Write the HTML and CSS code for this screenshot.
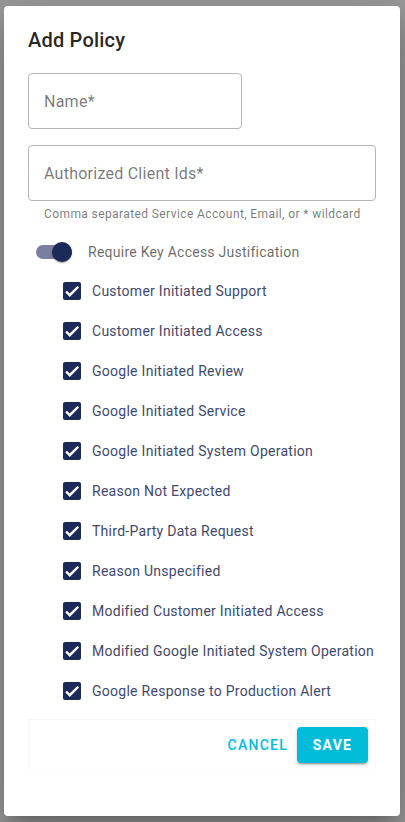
FILE: index.html
```html
<!DOCTYPE html>
<html>
<head lang="en">
    <meta charset="UTF-8">
    <title>Add Policy</title>
    <link rel="stylesheet" href="styles.css">
</head>
<body>
    <div class="dialog">
        <h2 class="title">Add Policy</h2>

        <div class="field field-short">
            <span class="placeholder">Name*</span>
        </div>

        <div class="field field-wide">
            <span class="placeholder">Authorized Client Ids*</span>
        </div>
        <div class="hint">Comma separated Service Account, Email, or * wildcard</div>

        <div class="toggle-row">
            <span class="toggle">
                <span class="toggle-bar"></span>
                <span class="toggle-thumb"></span>
            </span>
            <span class="toggle-label">Require Key Access Justification</span>
        </div>

        <ul class="reasons">
            <li><span class="box"><svg viewBox="0 0 24 24"><path d="M4.1 12.7 9 17.6 20.3 6.3"/></svg></span>Customer Initiated Support</li>
            <li><span class="box"><svg viewBox="0 0 24 24"><path d="M4.1 12.7 9 17.6 20.3 6.3"/></svg></span>Customer Initiated Access</li>
            <li><span class="box"><svg viewBox="0 0 24 24"><path d="M4.1 12.7 9 17.6 20.3 6.3"/></svg></span>Google Initiated Review</li>
            <li><span class="box"><svg viewBox="0 0 24 24"><path d="M4.1 12.7 9 17.6 20.3 6.3"/></svg></span>Google Initiated Service</li>
            <li><span class="box"><svg viewBox="0 0 24 24"><path d="M4.1 12.7 9 17.6 20.3 6.3"/></svg></span>Google Initiated System Operation</li>
            <li><span class="box"><svg viewBox="0 0 24 24"><path d="M4.1 12.7 9 17.6 20.3 6.3"/></svg></span>Reason Not Expected</li>
            <li><span class="box"><svg viewBox="0 0 24 24"><path d="M4.1 12.7 9 17.6 20.3 6.3"/></svg></span>Third-Party Data Request</li>
            <li><span class="box"><svg viewBox="0 0 24 24"><path d="M4.1 12.7 9 17.6 20.3 6.3"/></svg></span>Reason Unspecified</li>
            <li><span class="box"><svg viewBox="0 0 24 24"><path d="M4.1 12.7 9 17.6 20.3 6.3"/></svg></span>Modified Customer Initiated Access</li>
            <li><span class="box"><svg viewBox="0 0 24 24"><path d="M4.1 12.7 9 17.6 20.3 6.3"/></svg></span>Modified Google Initiated System Operation</li>
            <li><span class="box"><svg viewBox="0 0 24 24"><path d="M4.1 12.7 9 17.6 20.3 6.3"/></svg></span>Google Response to Production Alert</li>
        </ul>

        <div class="actions">
            <button class="btn btn-text">Cancel</button>
            <button class="btn btn-save">Save</button>
        </div>
    </div>
</body>
</html>
```

FILE: styles.css
```css
*{
    margin: 0;
    padding: 0;
    box-sizing: border-box;
}
ul{
    list-style: none;
}
body{
    background: #9b9b9b;
    font-family: Roboto, "Liberation Sans", sans-serif;
    padding: 6px 5px 6px 4px;
}
.dialog{
    width: 396px;
    height: 810px;
    background: #fff;
    border-radius: 4px;
    padding: 18px 24px 0 24px;
    box-shadow: 0 11px 15px -7px rgba(0,0,0,.2), 0 24px 38px 3px rgba(0,0,0,.14), 0 9px 46px 8px rgba(0,0,0,.12);
}
.title{
    font-size: 20px;
    font-weight: 500;
    line-height: 32px;
    letter-spacing: .2px;
    color: rgba(0,0,0,.87);
    margin-bottom: 17px;
}
.field{
    height: 56px;
    border: 1px solid #b5b5b5;
    border-radius: 4px;
    display: flex;
    align-items: center;
    padding: 0 15px;
}
.field-short{
    width: 214px;
    margin-bottom: 16px;
}
.field-wide{
    width: 348px;
}
.placeholder{
    font-size: 16px;
    letter-spacing: .25px;
    color: rgba(0,0,0,.54);
}
.hint{
    font-size: 12px;
    line-height: 16px;
    letter-spacing: .4px;
    color: rgba(0,0,0,.54);
    padding-left: 16px;
    margin-top: 5px;
}
.toggle-row{
    height: 38px;
    margin-top: 11px;
    display: flex;
    align-items: center;
    padding-left: 8px;
}
.toggle{
    position: relative;
    width: 36px;
    height: 20px;
    display: flex;
    align-items: center;
}
.toggle-bar{
    width: 36px;
    height: 14px;
    border-radius: 7px;
    background: #7a7f9e;
}
.toggle-thumb{
    position: absolute;
    left: 16px;
    top: 0;
    width: 20px;
    height: 20px;
    border-radius: 50%;
    background: #1b2a59;
    box-shadow: 0 2px 1px -1px rgba(0,0,0,.2), 0 1px 1px 0 rgba(0,0,0,.14), 0 1px 3px 0 rgba(0,0,0,.12);
}
.toggle-label{
    font-size: 14px;
    letter-spacing: .25px;
    color: rgba(0,0,0,.6);
    margin-left: 16px;
}
.reasons{
    padding-left: 35px;
}
.reasons li{
    height: 40px;
    display: flex;
    align-items: center;
    font-size: 14px;
    letter-spacing: .27px;
    color: #42496a;
}
.box{
    width: 18px;
    height: 18px;
    border-radius: 2px;
    background: #1b2a59;
    margin-right: 11px;
    display: flex;
}
.box svg{
    width: 18px;
    height: 18px;
    fill: none;
    stroke: #fff;
    stroke-width: 3.2;
}
.actions{
    margin-top: 8px;
    height: 51px;
    border: 1px solid #f6f6f6;
    border-right-color: #fafafa;
    border-bottom-color: #fcfcfc;
    display: flex;
    justify-content: flex-end;
    align-items: center;
    padding-right: 7px;
}
.btn{
    font-family: Roboto, "Liberation Sans", sans-serif;
    font-size: 14px;
    font-weight: 500;
    letter-spacing: 1.25px;
    text-transform: uppercase;
    border: 0;
    border-radius: 4px;
    height: 36px;
    cursor: pointer;
}
.btn-text{
    background: none;
    color: #00bcd9;
    padding: 0 8px;
    margin-right: 1px;
}
.btn-save{
    background: #00bcd9;
    color: #fff;
    font-weight: 700;
    width: 71px;
    box-shadow: 0 3px 1px -2px rgba(0,0,0,.2), 0 2px 2px 0 rgba(0,0,0,.14), 0 1px 5px 0 rgba(0,0,0,.12);
}
```
